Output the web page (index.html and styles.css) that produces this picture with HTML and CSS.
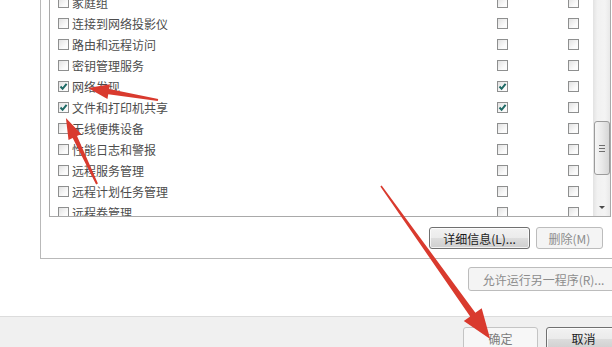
FILE: index.html
```html
<!DOCTYPE html>
<html lang="zh-CN">
<head>
<meta charset="UTF-8">
<meta name="viewport" content="width=device-width, initial-scale=1.0">
<title>允许的应用</title>
<link rel="stylesheet" href="styles.css">
</head>
<body>
  <div class="dialog">
    <div class="group">
      <div class="list">
        <div class="rows">
          <div class="row"><span class="item"><span class="cb"></span>家庭组</span><span class="cb"></span><span class="cb"></span></div>
          <div class="row"><span class="item"><span class="cb"></span>连接到网络投影仪</span><span class="cb"></span><span class="cb"></span></div>
          <div class="row"><span class="item"><span class="cb"></span>路由和远程访问</span><span class="cb"></span><span class="cb"></span></div>
          <div class="row"><span class="item"><span class="cb"></span>密钥管理服务</span><span class="cb"></span><span class="cb"></span></div>
          <div class="row">
            <span class="item"><span class="cb on"><svg viewBox="0 0 9 9"><path d="M1.5 4.5 L3.6 6.8 L7.6 1.8"/></svg></span>网络发现</span>
            <span class="cb on"><svg viewBox="0 0 9 9"><path d="M1.5 4.5 L3.6 6.8 L7.6 1.8"/></svg></span>
            <span class="cb"></span>
          </div>
          <div class="row">
            <span class="item"><span class="cb on"><svg viewBox="0 0 9 9"><path d="M1.5 4.5 L3.6 6.8 L7.6 1.8"/></svg></span>文件和打印机共享</span>
            <span class="cb on"><svg viewBox="0 0 9 9"><path d="M1.5 4.5 L3.6 6.8 L7.6 1.8"/></svg></span>
            <span class="cb"></span>
          </div>
          <div class="row"><span class="item"><span class="cb"></span>无线便携设备</span><span class="cb"></span><span class="cb"></span></div>
          <div class="row"><span class="item"><span class="cb"></span>性能日志和警报</span><span class="cb"></span><span class="cb"></span></div>
          <div class="row"><span class="item"><span class="cb"></span>远程服务管理</span><span class="cb"></span><span class="cb"></span></div>
          <div class="row"><span class="item"><span class="cb"></span>远程计划任务管理</span><span class="cb"></span><span class="cb"></span></div>
          <div class="row"><span class="item"><span class="cb"></span>远程卷管理</span><span class="cb"></span><span class="cb"></span></div>
        </div>
        <div class="scrollbar">
          <div class="track">
            <div class="thumb"><span class="grip"></span></div>
          </div>
          <div class="arrow-down"></div>
        </div>
      </div>
      <div class="actions">
        <button class="btn btn-details">详细信息(L)...</button>
        <button class="btn btn-remove" disabled>删除(M)</button>
      </div>
    </div>

    <button class="btn btn-allow" disabled>允许运行另一程序(R)...</button>

    <div class="footer">
      <button class="btn btn-ok">确定</button>
      <button class="btn btn-cancel">取消</button>
    </div>
  </div>

  <!-- red arrows drawn over the screenshot -->
  <svg class="marks" width="612" height="347" viewBox="0 0 612 347">
    <g fill="#d93a2e">
      <polygon transform="translate(158 100) rotate(189.7)" points="0,-1 50,-2.6 50,-7.5 71,0 50,7.5 50,2.6 0,1"/>
      <polygon transform="translate(97 184) rotate(244.8)" points="0,-1 52,-2.4 52,-7 73,0 52,7 52,2.4 0,1"/>
      <polygon transform="translate(381 186) rotate(54.5)" points="0,-0.8 158,-3.2 158,-11 188,0 158,11 158,3.2 0,0.8"/>
    </g>
  </svg>
</body>
</html>
```

FILE: styles.css
```css
html, body {
  margin: 0;
  height: 347px;
  overflow: hidden;
}

body {
  background-color: #fff;
  font-family: "Noto Sans CJK SC", "Liberation Sans", sans-serif;
  font-size: 12px;
  color: #4d4d4d;
  position: relative;
}

.dialog {
  width: 612px;
  height: 347px;
  overflow: hidden;
}

/* group box, top and right edges are cut off by the screenshot */
.group {
  margin-top: -40px;
  margin-left: 40px;
  width: 600px;
  border: 1px solid #b9b9b9;
  padding: 30px 0 9px 8px;
}

.list {
  display: flex;
  width: 562px;
  height: 226px;
  box-sizing: border-box;
  border: 1px solid #a9a9a9;
  background-color: #fff;
}

.rows {
  flex: 1;
  overflow: hidden;
}

.row {
  display: grid;
  grid-template-columns: 439px 71px 11px;
  align-items: center;
  height: 21px;
  padding-left: 8px;
}

.item {
  display: flex;
  align-items: center;
  gap: 3px;
  white-space: nowrap;
  line-height: 14px;
}

.cb {
  display: block;
  width: 11px;
  height: 11px;
  box-sizing: border-box;
  border: 1px solid #8e8f8f;
  background: linear-gradient(135deg, #e2e2e2, #fbfbfb 70%);
}

.cb svg {
  display: block;
  width: 9px;
  height: 9px;
}

.cb svg path {
  fill: none;
  stroke: #1f6a66;
  stroke-width: 2;
}

/* scrollbar */
.scrollbar {
  width: 17px;
  display: flex;
  flex-direction: column;
  background: linear-gradient(to right, #e2e2e2, #f1f1f1 25%, #f4f4f4 70%, #e9e9e9);
}

.track {
  flex: 1;
  padding-top: 129px;
}

.thumb {
  height: 54px;
  margin: 0 0 0 1px;
  box-sizing: border-box;
  border: 1px solid #9b9b9b;
  border-radius: 3px;
  background: linear-gradient(to right, #f6f6f6, #e9e9e9 50%, #d6d6d6);
  display: flex;
  align-items: center;
  justify-content: center;
}

.grip {
  width: 6px;
  height: 7px;
  background: repeating-linear-gradient(#6e6e6e 0 1px, transparent 1px 3px);
}

.arrow-down {
  height: 17px;
  display: flex;
  align-items: center;
  justify-content: center;
}

.arrow-down::after {
  content: "";
  border-left: 3px solid transparent;
  border-right: 3px solid transparent;
  border-top: 3px solid #4a4a4a;
}

/* buttons */
.btn {
  font-family: "Noto Sans CJK SC", "Liberation Sans", sans-serif;
  font-size: 12px;
  color: #1b1b1b;
  padding: 0;
  border: 1px solid #707070;
  border-radius: 3px;
  background: linear-gradient(#f2f2f2 0, #ebebeb 50%, #dddddd 50%, #cfcfcf 100%);
  box-shadow: inset 0 0 0 1px rgba(255, 255, 255, 0.75);
  white-space: nowrap;
}

.btn:disabled {
  color: #8c8c8c;
  border-color: #bcbcbc;
  background: #f4f4f4;
  box-shadow: none;
}

.actions {
  display: flex;
  justify-content: flex-end;
  gap: 6px;
  width: 554px;
  margin-top: 10px;
}

.btn-details {
  width: 101px;
  height: 22px;
}

.btn-remove {
  width: 67px;
  height: 22px;
}

.btn-allow {
  display: block;
  width: 151px;
  height: 24px;
  margin: 8px 0 0 468px;
}

.footer {
  margin-top: 25px;
  height: 40px;
  border-top: 1px solid #dcdcdc;
  background-color: #f0f0f0;
  padding: 10px 0 0 463px;
  display: flex;
  gap: 8px;
}

.btn-ok,
.btn-cancel {
  width: 75px;
  height: 23px;
  flex: none;
}

.btn-ok {
  color: #7d7d7d;
  border-color: #c4c4c4;
  background: #f7f7f7;
  box-shadow: none;
}

.marks {
  position: absolute;
  top: 0;
  left: 0;
  pointer-events: none;
}
```
